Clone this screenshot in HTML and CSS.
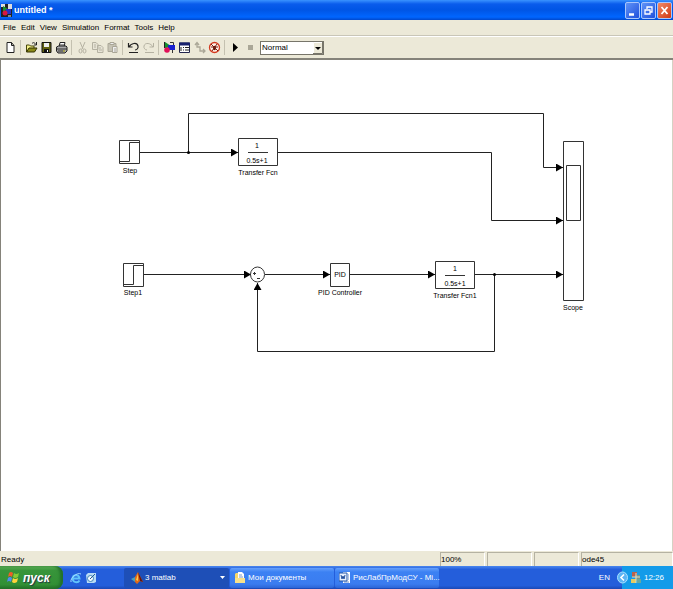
FILE: index.html
```html
<!DOCTYPE html>
<html lang="en">
<head>
<meta charset="utf-8">
<title>untitled *</title>
<link rel="stylesheet" href="styles.css">
</head>
<body>
<header class="titlebar">
  <svg class="app-icon" width="11" height="13" viewBox="0 0 11 13"><path fill="#222" d="M0 0h11v13H0z"/><path fill="#ddd" d="M0 0h4v3H0zM7 0h4v5H7z"/><path fill="#189030" d="M2 2l5 3-5 3z"/><path fill="#2430c8" d="M5 5h5v5H5z"/><circle cx="4" cy="9" r="2.5" fill="#d81840"/><path stroke="#eee" d="M7 12h3"/></svg>
  <h1 class="title">untitled *</h1>
  <div class="window-buttons">
    <button class="win-btn" aria-label="Minimize"><svg width="13" height="15" viewBox="0 0 13 15"><path d="M3 11.500h5" stroke="#fff" stroke-width="2.500"/></svg></button>
    <button class="win-btn" aria-label="Restore"><svg width="13" height="15" viewBox="0 0 13 15"><path d="M5 6V4h5v5H8M3 7h5v4H3z" fill="none" stroke="#fff" stroke-width="1.300"/></svg></button>
    <button class="win-btn win-close" aria-label="Close"><svg width="13" height="15" viewBox="0 0 13 15"><path d="M3.500 4l6 7M9.500 4l-6 7" stroke="#fff" stroke-width="1.800"/></svg></button>
  </div>
</header>
<nav class="menubar">
  <button class="menu">File</button><button class="menu">Edit</button><button class="menu">View</button><button class="menu">Simulation</button><button class="menu">Format</button><button class="menu">Tools</button><button class="menu">Help</button>
</nav>
<div class="toolbar">
  <button class="tool" aria-label="New"><svg width="13" height="13" viewBox="0 0 13 13"><path d="M3 1.500h4.500l2.500 3v7H3zM7.500 1.500v3H10" fill="#fff" stroke="#222"/></svg></button>
  <span class="sep"></span>
  <button class="tool" aria-label="Open"><svg width="13" height="13" viewBox="0 0 13 13"><path d="M1.500 11V4h3l1 1H9v2" fill="#f3ef87" stroke="#47470a"/><path d="M1.500 11L4 7h8l-2.500 4z" fill="#8b8a18" stroke="#333300"/><path d="M7 2.500c2-2 3 0 4 1M11.500 1v3H9" fill="none" stroke="#222"/></svg></button>
  <button class="tool" aria-label="Save"><svg width="13" height="13" viewBox="0 0 13 13"><path d="M2 1.500h9v10H2z" fill="#626310" stroke="#111"/><path d="M4 2h5v4H4z" fill="#eee"/><path d="M4 8h5v3H4z" fill="#111"/><path d="M7 9h1v2H7z" fill="#fff"/></svg></button>
  <button class="tool" aria-label="Print"><svg width="13" height="13" viewBox="0 0 13 13"><path d="M4 6l1-4.500h5L9 6" fill="#fff" stroke="#222"/><path d="M1.500 6l2-1H11l1 1v4l-2 2H3l-1.500-2z" fill="#aaa" stroke="#222"/><path d="M2 8h10M3 10h7M5 4h4" stroke="#333"/><path d="M8 10h2" stroke="#d8cf30"/></svg></button>
  <span class="sep"></span>
  <button class="tool" aria-label="Cut" disabled><svg width="13" height="13" viewBox="0 0 13 13"><path d="M4 1l3 7M9 1L6 8" stroke="#b5b2a2" fill="none"/><ellipse cx="4.500" cy="10" rx="1.500" ry="2" fill="none" stroke="#b5b2a2"/><ellipse cx="8.500" cy="10" rx="1.500" ry="2" fill="none" stroke="#b5b2a2"/></svg></button>
  <button class="tool" aria-label="Copy" disabled><svg width="13" height="13" viewBox="0 0 13 13"><path d="M1.500 1.500H5l2 2v5H1.500zM6.500 4.500H10l2 2v5H6.500zM3 4h2M3 6h2M8 7h2M8 9h3" fill="#e7e4d6" stroke="#b5b2a2"/></svg></button>
  <button class="tool" aria-label="Paste" disabled><svg width="13" height="13" viewBox="0 0 13 13"><path d="M2 2.500h8v8H2z" fill="#c6c3b4" stroke="#aaa797"/><path d="M4 1.500h4v2H4z" fill="#eee" stroke="#aaa797"/><path d="M6.500 5.500H11v6H6.500zM8 8h2M8 10h2" fill="#eee" stroke="#aaa797"/></svg></button>
  <span class="sep"></span>
  <button class="tool" aria-label="Undo"><svg width="13" height="13" viewBox="0 0 13 13"><path d="M1.500 2v4h4M2 6c2-4 8-5 9-1 .5 2-1 4-3 4M2 11.500h9" fill="none" stroke="#222" stroke-width="1.200"/></svg></button>
  <button class="tool" aria-label="Redo" disabled><svg width="13" height="13" viewBox="0 0 13 13"><path d="M11.500 2v4h-4M11 6C9 2 3 1 2 5c-.5 2 1 4 3 4M3 11.500h9" fill="none" stroke="#b5b2a2"/></svg></button>
  <span class="sep"></span>
  <button class="tool" aria-label="Library browser"><svg width="13" height="13" viewBox="0 0 13 13"><path d="M1.500 1v6" stroke="#222"/><path d="M2 1l6 4-6 3z" fill="#159030"/><path d="M5 4h7v5H5z" fill="#1820d0"/><circle cx="4" cy="9" r="2.800" fill="#e01058"/><path d="M7 1.500h3.500V4M9.500 9v3" fill="none" stroke="#333"/></svg></button>
  <button class="tool" aria-label="Model explorer"><svg width="13" height="13" viewBox="0 0 13 13"><path d="M1.500 2h10v9.500h-10z" fill="#fff" stroke="#20244d"/><path d="M1 1.500h11v3H1z" fill="#17206e"/><path d="M3 6v4M5 6.500h1M7 6.500h4M5 9h1M7 9h4" stroke="#222"/></svg></button>
  <button class="tool" aria-label="Go to parent" disabled><svg width="13" height="13" viewBox="0 0 13 13"><path d="M2 4l2-2.500L6 4M4 2v4h3v4h5M10 8l2 2-2 2" fill="none" stroke="#aaa797" stroke-width="1.300"/></svg></button>
  <button class="tool" aria-label="Debug"><svg width="13" height="13" viewBox="0 0 13 13"><circle cx="6.500" cy="6.500" r="5" fill="#fff3e8" stroke="#d33a20" stroke-width="1.300"/><ellipse cx="6.500" cy="7" rx="1.500" ry="2.300" fill="#501808"/><path d="M3 3l7 7M3 6h7M4 10l5-7" stroke="#7a1c10"/></svg></button>
  <span class="sep"></span>
  <button class="tool" aria-label="Start simulation"><svg width="13" height="13" viewBox="0 0 13 13"><path d="M4 2l5 4.500L4 11z"/></svg></button>
  <button class="tool" aria-label="Stop" disabled><svg width="13" height="13" viewBox="0 0 13 13"><path d="M4 4h5v5H4z" fill="#aaa797"/></svg></button>
  <div class="mode"><select class="mode-select" aria-label="Simulation mode"><option>Normal</option></select><svg class="mode-arrow" width="10" height="12" viewBox="0 0 10 12"><path d="M0 0h10v12H0z" fill="#ece9d8"/><path d="M.5 12V.5H10" stroke="#fff" fill="none"/><path d="M9.500 0v11.500H0" stroke="#77756a" fill="none"/><path d="M2 5h6L5 8z"/></svg></div>
</div>
<main class="canvas">
  <svg class="diagram" role="img" aria-label="Block diagram">
    <defs><marker id="arrow" viewBox="0 0 7 8" refX="7" refY="4" markerWidth="7" markerHeight="8" markerUnits="userSpaceOnUse" orient="auto"><path d="M0 0l7 4-7 4z"/></marker></defs>
    <g class="wire">
      <path d="M139 92.500H237"/><path d="M187.500 92V53.500H542.500V107.500H562"/><path d="M277 92.500H490.500V160.500H562"/>
      <path d="M142 214.500H250"/><path d="M264 214.500H329"/><path d="M349 214.500H434"/><path d="M474 214.500H562"/><path d="M493.500 214V291.500H256.500V223"/>
    </g>
    <circle cx="187.500" cy="92.500" r="1.500"/><circle cx="493.500" cy="214.500" r="1.500"/>
    <g class="block">
      <path d="M118.500 80.500h20v23h-20z"/><path d="M122.500 203.500h20v23h-20z"/><path d="M237.500 78.500h39v27h-39z"/><path d="M434.500 201.500h39v27h-39z"/>
      <path d="M329.500 203.500h19v23h-19z"/><ellipse cx="256.500" cy="214.500" rx="7" ry="7.500"/><path d="M562.500 81.500h20v159h-20z"/><path d="M565.500 105.500h14v55h-14z"/>
      <path d="M119 101.500h9.500v-19H138M123 224.500h9.500v-19H142M247 92.500h20M444 215.500h20M252 213.500h3M253.500 212v3M256 218.500h3"/>
    </g>
    <g class="label">
      <text x="129" y="113">Step</text><text x="132" y="235">Step1</text><text x="257" y="115">Transfer Fcn</text><text x="454" y="238">Transfer Fcn1</text><text x="339" y="235">PID Controller</text><text x="572" y="250">Scope</text>
      <text x="256" y="88">1</text><text x="256" y="103">0.5s+1</text><text x="454" y="211">1</text><text x="454" y="226">0.5s+1</text><text x="339" y="217">PID</text>
    </g>
  </svg>
</main>
<footer class="statusbar"><span class="cell ready">Ready</span><span class="cell zoom">100%</span><span class="cell"></span><span class="cell"></span><span class="cell solver">ode45</span></footer>
<div class="taskbar">
  <button class="start"><svg width="13" height="13" viewBox="0 0 13 13"><path d="M2 2q2-2 4 0L5 6Q3 4 1 6z" fill="#f05e28"/><path d="M7 2q2 2 5 0l-1 4q-3 2-5 0z" fill="#85cb35"/><path d="M1 7q2-2 4 0l-1 4q-2-2-4 0z" fill="#4f8df0"/><path d="M6 7q2 2 5 0l-1 4q-3 2-5 0z" fill="#ffd43a"/></svg><span>пуск</span></button>
  <div class="quick">
    <button class="quick-btn" aria-label="Internet Explorer"><svg width="12" height="14" viewBox="0 0 12 14"><path d="M9.500 9.500C8 12 3 12 2.500 7.500 3 3 9 3 9.500 7.500h-7" fill="none" stroke="#62c4fb" stroke-width="2"/><path d="M1 11C0 7 7 1 11 3" fill="none" stroke="#a5dcff"/></svg></button>
    <button class="quick-btn" aria-label="Show desktop"><svg width="12" height="14" viewBox="0 0 12 14"><path d="M1 4l2-2h8v9l-2 1H2z" fill="#b9dcf5"/><circle cx="5.500" cy="7.500" r="3" fill="#f4faff" stroke="#3b82b8"/><path d="M5 8l5-5" stroke="#235c98"/></svg></button>
  </div>
  <button class="task task-active"><svg width="12" height="14" viewBox="0 0 12 14"><path d="M0 8l4-2 2 3-2 2z" fill="#4fa1b8"/><path d="M4 6l3-5 5 10-3-1-3 3-2-2z" fill="#e06a1b"/><path d="M7 1l5 10-3-1z" fill="#641710"/><path d="M5 9l2-6v7z" fill="#ffca4c"/></svg><span class="task-text">3 matlab</span><svg width="5" height="4" viewBox="0 0 5 4"><path d="M0 0h5L2.500 3z" fill="#fff"/></svg></button>
  <button class="task"><svg width="12" height="14" viewBox="0 0 12 14"><path d="M1 3l1-1h3l1 1h4v9H1z" fill="#f4d66b"/><path d="M4 1h4l2 2v6H4z" fill="#fff"/><path d="M1 7h10v5H1z" fill="#f8e18b"/><path d="M5 4h3M5 6h4" stroke="#7898c8"/></svg><span class="task-text">Мои документы</span></button>
  <button class="task"><svg width="12" height="14" viewBox="0 0 12 14"><path d="M4 1h7v11H4z" fill="#fff"/><path d="M9 4h1M9 6h1M9 8h1M5 11h5" stroke="#628acc"/><path d="M0 2h8v8H0z" fill="#e6efff" stroke="#2457a8"/><path d="M2 4l1 4 1-3 1 3 1-4" fill="none" stroke="#214e9c"/></svg><span class="task-text">РисЛабПрМодСУ - Mi...</span></button>
  <span class="lang">EN</span>
  <div class="tray">
    <button class="chevron" aria-label="Show hidden icons"><svg width="11" height="13" viewBox="0 0 11 13"><ellipse cx="5.500" cy="6.500" rx="5" ry="5.500" fill="#5cb4f4" stroke="#a8e0ff"/><path d="M7 3.500l-3 3 3 3" fill="none" stroke="#fff" stroke-width="1.600"/></svg></button>
    <svg width="12" height="14" viewBox="0 0 12 14"><path d="M2 1h5v5H2z" fill="#b7634d"/><path d="M5 4h5v6H5z" fill="#78968a"/><path d="M1 8h5v4H1z" fill="#e6cb61"/><path d="M7 8h4v4H7z" fill="#67a8a0"/><path d="M2 6h8M6 2v10" stroke="#d8dfc8"/></svg>
    <time class="clock">12:26</time>
  </div>
</div>
</body>
</html>
```
FILE: styles.css
```css
* { box-sizing: border-box; }
body {
  margin: 0;
  min-height: 100vh;
  display: flex;
  flex-direction: column;
  font: 8px/14px "Liberation Sans", sans-serif;
  color: #000;
  background: #ece9d8;
}
button {
  margin: 0;
  padding: 0;
  border: 0;
  background: none;
  font: inherit;
  color: inherit;
}
svg { display: block; flex: none; }

.titlebar {
  display: flex;
  align-items: center;
  height: 20px;
  padding: 0 1px;
  gap: 2px;
  background: linear-gradient(#3a93ff, #0a5cec 20%, #0055e5 50%, #0066ff 85%, #0048cd);
}
.title {
  flex: 1;
  margin: 0;
  font: bold 9px/12px "Liberation Sans", sans-serif;
  color: #fff;
}
.window-buttons { display: flex; gap: 1px; }
.win-btn {
  width: 15px;
  height: 17px;
  border: 1px solid #a9c6fb;
  border-radius: 2px;
  background: linear-gradient(135deg, #5f93f7, #1f50dc);
}
.win-close { background: linear-gradient(135deg, #f08a68, #d03a14); }

.menubar {
  display: flex;
  gap: 5px;
  height: 16px;
  padding: 0 3px;
  border-bottom: 1px solid #c9c6b8;
}
.toolbar {
  display: flex;
  align-items: center;
  height: 24px;
  padding-left: 3px;
  border-top: 1px solid #fff;
  border-bottom: 2px solid #85837a;
}
.tool {
  display: flex;
  justify-content: center;
  width: 15px;
}
.sep {
  width: 1px;
  height: 15px;
  margin: 0 3px 0 2px;
  background: #c4c1b0;
}
.mode {
  position: relative;
  width: 64px;
  margin-left: 2px;
}
.mode-select {
  display: block;
  width: 100%;
  height: 14px;
  padding: 0 1px;
  border: 1px solid #77756a;
  border-radius: 0;
  appearance: none;
  background: #fff;
  font: inherit;
  line-height: 12px;
  color: #000;
}
.mode-arrow {
  position: absolute;
  top: 1px;
  right: 1px;
  pointer-events: none;
}

.canvas {
  flex: 1;
  display: flex;
  border-left: 1px solid #85837a;
  border-right: 1px solid #d5d2c4;
  background: #fff;
}
.diagram { flex: 1; width: 100%; min-height: 320px; }
.wire path { fill: none; stroke: #222; marker-end: url(#arrow); }
.block > * { fill: none; stroke: #333; }
.label {
  font: 7px "Liberation Sans", sans-serif;
  text-anchor: middle;
}

.statusbar {
  display: grid;
  grid-template-columns: 1fr 45px 45px 45px 92px;
  gap: 2px;
  height: 15px;
  padding-top: 1px;
}
.cell {
  border: 1px solid;
  border-color: #b5b2a2 #fff #fff #b5b2a2;
}
.ready { border-color: transparent; }

.taskbar {
  display: flex;
  height: 23px;
  background: linear-gradient(#4a87ee, #245edb 15%, #245edb 85%, #1b48b5);
  color: #fff;
}
.start {
  display: flex;
  align-items: center;
  gap: 3px;
  width: 63px;
  padding-left: 7px;
  border-radius: 0 8px 8px 0;
  background: linear-gradient(#62b45c, #37943a 20%, #329035 80%, #247028);
  box-shadow: inset -3px 0 3px #22702a;
  font: italic bold 12px/20px "Liberation Sans", sans-serif;
  text-shadow: 1px 1px 1px #234;
}
.quick {
  display: flex;
  align-items: center;
  gap: 3px;
  width: 61px;
  padding-left: 7px;
}
.task {
  display: flex;
  align-items: center;
  gap: 2px;
  width: 104px;
  margin: 2px 1px 1px 0;
  padding: 0 4px;
  border-radius: 2px;
  background: linear-gradient(#65a0fb, #3c81f3 20%, #3a7cf0 80%, #2c65d6);
}
.task-active {
  width: 105px;
  padding-left: 7px;
  background: #1e4fb7;
}
.task-text { flex: 1; text-align: left; white-space: nowrap; }
.lang { margin-left: auto; align-self: center; margin-right: 7px; }
.tray {
  display: flex;
  align-items: center;
  gap: 2px;
  padding-right: 9px;
  background: linear-gradient(90deg, transparent 5px, #139be9 5px);
}
```
